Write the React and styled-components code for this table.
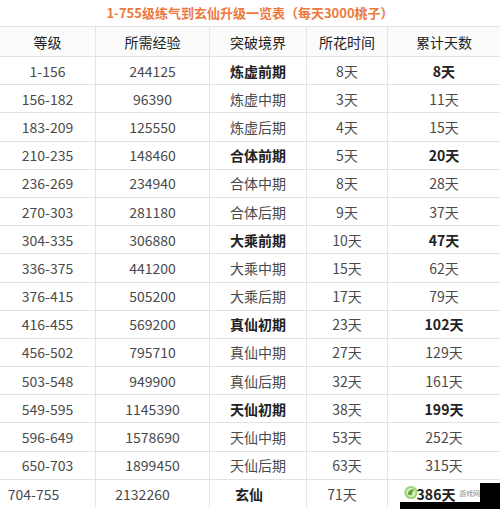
import React from "react";
import styled, { createGlobalStyle } from "styled-components";

const rows = [
  ["1-156", "244125", "炼虚前期", "8天", "8天", true],
  ["156-182", "96390", "炼虚中期", "3天", "11天"],
  ["183-209", "125550", "炼虚后期", "4天", "15天"],
  ["210-235", "148460", "合体前期", "5天", "20天", true],
  ["236-269", "234940", "合体中期", "8天", "28天"],
  ["270-303", "281180", "合体后期", "9天", "37天"],
  ["304-335", "306880", "大乘前期", "10天", "47天", true],
  ["336-375", "441200", "大乘中期", "15天", "62天"],
  ["376-415", "505200", "大乘后期", "17天", "79天"],
  ["416-455", "569200", "真仙初期", "23天", "102天", true],
  ["456-502", "795710", "真仙中期", "27天", "129天"],
  ["503-548", "949900", "真仙后期", "32天", "161天"],
  ["549-595", "1145390", "天仙初期", "38天", "199天", true],
  ["596-649", "1578690", "天仙中期", "53天", "252天"],
  ["650-703", "1899450", "天仙后期", "63天", "315天"],
];

const lastRow = ["704-755", "2132260", "玄仙", "71天", "386天"];
// the last row is printed a little off-centre in the picture
const lastShift = [28, 20, 18, 10, 16];

const headers = ["等级", "所需经验", "突破境界", "所花时间", "累计天数"];

const App = () => {
  return (
    <Page>
      <GlobalStyle />
      <Title>1-755级练气到玄仙升级一览表（每天3000桃子）</Title>
      <Grid>
        {headers.map((h, i) => (
          <HeadCell key={h} last={i === 4}>
            {h}
          </HeadCell>
        ))}
        {rows.map((r) =>
          [0, 1, 2, 3, 4].map((i) => (
            <Cell
              key={r[0] + i}
              last={i === 4}
              bold={r[5] && (i === 2 || i === 4)}
            >
              {r[i]}
            </Cell>
          ))
        )}
        {lastRow.map((v, i) => (
          <Cell
            key={"last" + i}
            last={i === 4}
            end
            bold={i === 2 || i === 4}
            shift={lastShift[i]}
          >
            <CellText>{v}</CellText>
          </Cell>
        ))}
      </Grid>
      <Watermark>
        <Badge>
          <svg width="15" height="15" viewBox="0 0 16 16">
            <circle cx="8" cy="8" r="7.5" fill="#9fd37a" />
            <circle cx="8" cy="8" r="5.2" fill="#d9f0c4" />
            <path
              d="M4 10.5 C5 6 8 4 12 4.5 C10 6 9 8.5 8.6 11.5 C7 10.5 5.5 10.3 4 10.5Z"
              fill="#5aa62f"
            />
          </svg>
          <MarkText>游戏网</MarkText>
        </Badge>
        <Corner />
        <Strip />
      </Watermark>
    </Page>
  );
};

export default App;

const GlobalStyle = createGlobalStyle`
  body {
    margin: 0;
    background: #ffffff;
    font-family: "Noto Sans CJK SC", "Noto Sans", sans-serif;
  }
`;

const Page = styled.div`
  position: relative;
  width: 500px;
  height: 509px;
  overflow: hidden;
  background: #ffffff;
`;

const Title = styled.div`
  height: 27px;
  box-sizing: border-box;
  border-bottom: 1px solid #e2e2e2;
  display: flex;
  align-items: center;
  justify-content: center;
  font-size: 13px;
  font-weight: bold;
  color: #ec7a3d;
  padding-bottom: 1px;
`;

const Grid = styled.div`
  display: grid;
  grid-template-columns: 96px 114px 97px 81px 112px;
  grid-template-rows: 30px;
  grid-auto-rows: 28.2px;
`;

const HeadCell = styled.div`
  box-sizing: border-box;
  display: flex;
  align-items: center;
  justify-content: center;
  border-bottom: 1px solid #e2e2e2;
  border-right: ${({ last }) => (last ? "none" : "1px solid #e6e6e6")};
  background: #fbfbfb;
  font-size: 14px;
  color: #222;
`;

const Cell = styled.div`
  position: relative;
  box-sizing: border-box;
  display: flex;
  align-items: center;
  justify-content: center;
  padding-right: ${({ shift }) => (shift ? shift + "px" : "0")};
  border-bottom: ${({ end }) => (end ? "none" : "1px solid #e2e2e2")};
  border-right: ${({ last }) => (last ? "none" : "1px solid #e6e6e6")};
  font-size: 14px;
  font-weight: ${({ bold }) => (bold ? "bold" : "normal")};
  color: ${({ bold }) => (bold ? "#222" : "#4a4a4a")};
`;

const CellText = styled.span`
  position: relative;
  z-index: 3;
`;

const Watermark = styled.div`
  position: absolute;
  left: 400px;
  top: 483px;
  width: 100px;
  height: 26px;
  z-index: 2;
  display: grid;
  grid-template-columns: 80px 20px;
  grid-template-rows: 19px 7px;
`;

const Badge = styled.div`
  grid-row: 1;
  grid-column: 1;
  background: #ffffff;
  display: flex;
  align-items: center;
  padding-left: 4px;
`;

const MarkText = styled.span`
  font-size: 7px;
  color: #8a8a8a;
  margin-left: 41px;
  white-space: nowrap;
`;

const Corner = styled.div`
  grid-row: 1 / 3;
  grid-column: 2;
  background: #000;
`;

const Strip = styled.div`
  grid-row: 2;
  grid-column: 1;
  background: #000;
`;
